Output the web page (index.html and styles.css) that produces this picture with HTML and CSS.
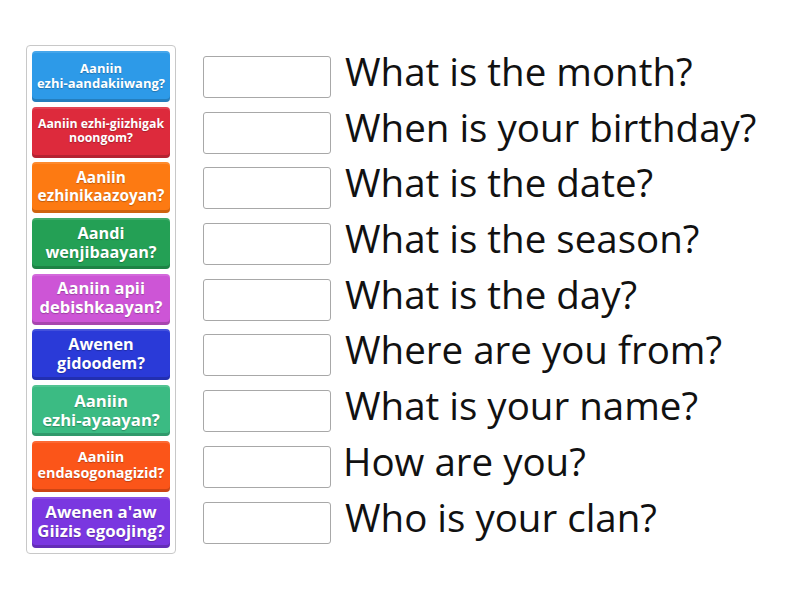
FILE: index.html
```html
<!DOCTYPE html>
<html>
<head>
<meta charset="utf-8">
<link rel="stylesheet" href="styles.css">
</head>
<body>
<div class="game">
  <div class="bank">
    <div class="tile t-blue fs-a"><span>Aaniin</span><span>ezhi-aandakiiwang?</span></div>
    <div class="tile t-red fs-b"><span>Aaniin ezhi-giizhigak</span><span>noongom?</span></div>
    <div class="tile t-orange fs-c"><span>Aaniin</span><span>ezhinikaazoyan?</span></div>
    <div class="tile t-green fs-d"><span>Aandi</span><span>wenjibaayan?</span></div>
    <div class="tile t-pink fs-e"><span>Aaniin apii</span><span>debishkaayan?</span></div>
    <div class="tile t-navy fs-d"><span>Awenen</span><span>gidoodem?</span></div>
    <div class="tile t-teal fs-g"><span>Aaniin</span><span>ezhi-ayaayan?</span></div>
    <div class="tile t-tomato fs-h"><span>Aaniin</span><span>endasogonagizid?</span></div>
    <div class="tile t-violet fs-f"><span>Awenen a'aw</span><span>Giizis egoojing?</span></div>
  </div>
  <div class="targets">
    <div class="row"><div class="slot"></div><div class="label">What is the month?</div></div>
    <div class="row"><div class="slot"></div><div class="label">When is your birthday?</div></div>
    <div class="row"><div class="slot"></div><div class="label">What is the date?</div></div>
    <div class="row"><div class="slot"></div><div class="label">What is the season?</div></div>
    <div class="row"><div class="slot"></div><div class="label">What is the day?</div></div>
    <div class="row"><div class="slot"></div><div class="label">Where are you from?</div></div>
    <div class="row"><div class="slot"></div><div class="label">What is your name?</div></div>
    <div class="row"><div class="slot"></div><div class="label shift">How are you?</div></div>
    <div class="row"><div class="slot"></div><div class="label">Who is your clan?</div></div>
  </div>
</div>
</body>
</html>
```

FILE: styles.css
```css
html, body {
  margin: 0;
  padding: 0;
  background: #fff;
}
body {
  font-family: "Open Sans", "Liberation Sans", sans-serif;
}
.game {
  display: flex;
  align-items: flex-start;
  padding: 45px 0 0 26px;
}
.bank {
  width: 138px;
  padding: 5px;
  border: 1px solid #c8c8c8;
  border-radius: 4px;
  display: flex;
  flex-direction: column;
  gap: 4.7px;
}
.tile {
  height: 51px;
  box-sizing: border-box;
  border-radius: 4px;
  color: #fff;
  font-weight: 700;
  line-height: 1.14;
  text-align: center;
  display: flex;
  flex-direction: column;
  align-items: center;
  justify-content: center;
  padding-bottom: 2px;
  white-space: nowrap;
  text-shadow: 0 1px 1px rgba(0,0,0,0.25);
  box-shadow: inset 0 -3px 0 rgba(0,0,0,0.18), inset 0 2px 0 rgba(255,255,255,0.12);
}
.tile span {
  display: block;
}
.fs-a { font-size: 13px; }
.fs-b { font-size: 12.3px; }
.fs-c { font-size: 15.4px; }
.fs-d { font-size: 16.2px; }
.fs-e { font-size: 16.5px; }
.fs-g { font-size: 16.7px; }
.fs-h { font-size: 14.4px; }
.fs-f { font-size: 16.8px; }
.t-blue { background: #2d9ae8; }
.t-red { background: #dd2a3c; }
.t-orange { background: #fd7a12; }
.t-green { background: #24a055; }
.t-pink { background: #cd55d6; }
.t-navy { background: #2a3ad8; }
.t-teal { background: #3bbb83; }
.t-tomato { background: #fb5519; }
.t-violet { background: #7a37e0; }

.targets {
  margin-left: 27px;
  display: flex;
  flex-direction: column;
}
.row {
  height: 55.7px;
  display: flex;
  align-items: flex-start;
}
.slot {
  width: 126px;
  height: 40px;
  margin-top: 11px;
  border: 1px solid #a8a8a8;
  border-radius: 3px;
  background: #fff;
}
.label {
  margin-left: 14px;
  margin-top: 0;
  font-size: 38.5px;
  line-height: 52px;
  color: #111;
  white-space: nowrap;
}
.label.shift {
  margin-left: 12px;
}
```
